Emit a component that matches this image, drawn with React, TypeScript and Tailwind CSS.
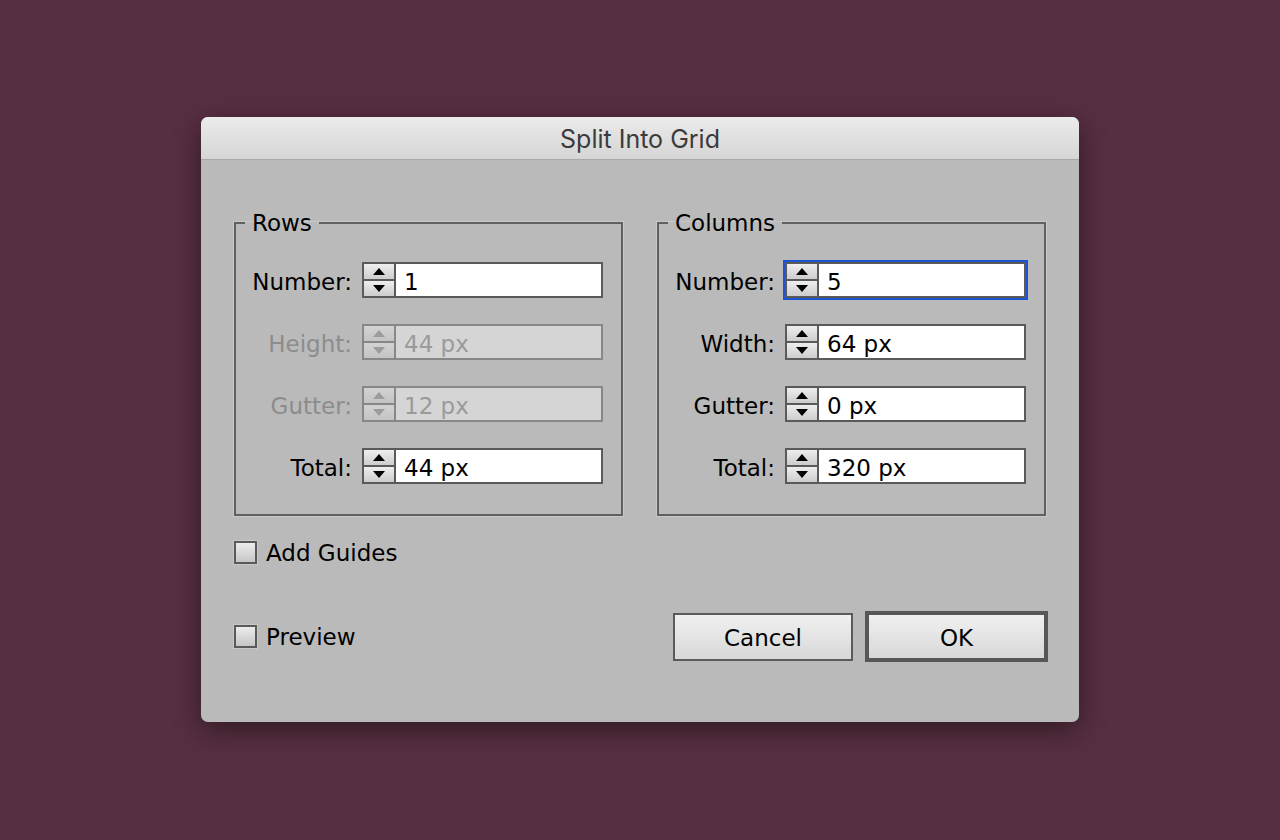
import clsx from 'clsx';

type Field = {
  label: string;
  value: string;
  disabled?: boolean;
  focused?: boolean;
};

const rows: Field[] = [
  { label: 'Number:', value: '1' },
  { label: 'Height:', value: '44 px', disabled: true },
  { label: 'Gutter:', value: '12 px', disabled: true },
  { label: 'Total:', value: '44 px' },
];

const columns: Field[] = [
  { label: 'Number:', value: '5', focused: true },
  { label: 'Width:', value: '64 px' },
  { label: 'Gutter:', value: '0 px' },
  { label: 'Total:', value: '320 px' },
];

function Arrow({ up, disabled }: { up?: boolean; disabled?: boolean }) {
  return (
    <svg width="12" height="7" viewBox="0 0 12 7" className={disabled ? 'fill-[#9c9c9c]' : 'fill-black'}>
      {up ? <polygon points="0,7 6,0 12,7" /> : <polygon points="0,0 12,0 6,7" />}
    </svg>
  );
}

function Stepper({ value, disabled, focused }: Omit<Field, 'label'>) {
  const half = clsx(
    'flex flex-1 items-center justify-center',
    disabled ? 'bg-gradient-to-b from-[#d2d2d2] to-[#c4c4c4]' : 'bg-gradient-to-b from-[#eeeeee] to-[#cdcdcd]'
  );
  return (
    <div
      className={clsx(
        'flex h-[36px] w-[241px] border-2',
        disabled ? 'border-[#878787]' : 'border-[#5a5a5a]',
        focused && 'shadow-[0_0_0_2px_#1d52d2]'
      )}
    >
      <div className={clsx('flex w-[32px] flex-col border-r-2', disabled ? 'border-[#878787]' : 'border-[#5a5a5a]')}>
        <div className={clsx(half, 'border-b-2', disabled ? 'border-[#878787]' : 'border-[#5a5a5a]')}>
          <Arrow up disabled={disabled} />
        </div>
        <div className={half}>
          <Arrow disabled={disabled} />
        </div>
      </div>
      <div
        className={clsx(
          'flex flex-1 items-center pt-[5px] pl-[8px] text-[23px] leading-none',
          disabled ? 'bg-[#d5d5d5] text-[#9a9a9a]' : 'bg-white text-black'
        )}
      >
        {value}
      </div>
    </div>
  );
}

function Group({ title, fields }: { title: string; fields: Field[] }) {
  return (
    <fieldset className="w-[389px] border-2 border-[#606060] shadow-[0_0_0_1px_#c8c8c8]">
      <legend className="ml-[9px] px-[7px] text-[23px] leading-[28px] text-black">{title}</legend>
      <div className="flex flex-col gap-[26px] pt-[25px] pb-[30px]">
        {fields.map((f) => (
          <div key={f.label} className="flex items-center">
            <span
              className={clsx(
                'w-[116px] pt-[5px] text-right text-[23px] leading-none',
                f.disabled ? 'text-[#8c8c8c]' : 'text-black'
              )}
            >
              {f.label}
            </span>
            <div className="ml-[10px]">
              <Stepper value={f.value} disabled={f.disabled} focused={f.focused} />
            </div>
          </div>
        ))}
      </div>
    </fieldset>
  );
}

function Checkbox({ label }: { label: string }) {
  return (
    <label className="flex items-center gap-[9px]">
      <span className="h-[23px] w-[23px] border-2 border-[#5a5a5a] bg-gradient-to-b from-[#ececec] to-[#c6c6c6] shadow-[0_0_0_1px_#c8c8c8]" />
      <span className="pt-[2px] text-[23px] leading-none text-black">{label}</span>
    </label>
  );
}

export default function App() {
  return (
    <div className="flex h-[840px] w-full justify-center bg-[#572f42] pt-[117px] font-['DejaVu_Sans',sans-serif]">
      <div className="flex h-[605px] w-[878px] flex-col overflow-hidden rounded-[7px] bg-[#bababa] shadow-[0_8px_28px_rgba(0,0,0,0.45)]">
        <div className="flex h-[43px] items-center justify-center border-b border-[#a9a9a9] bg-gradient-to-b from-[#ebebeb] to-[#d5d5d5]">
          <span className="pt-[3px] font-['Inter',sans-serif] text-[25px] leading-none text-[#3b3b3b]">Split Into Grid</span>
        </div>

        <div className="flex flex-col px-[33px] pt-[49px]">
          <div className="flex justify-between">
            <Group title="Rows" fields={rows} />
            <Group title="Columns" fields={columns} />
          </div>

          <div className="mt-[24px]">
            <Checkbox label="Add Guides" />
          </div>

          <div className="mt-[46px] flex items-center justify-between">
            <Checkbox label="Preview" />
            <div className="-mr-[2px] flex items-center gap-[12px]">
              <button className="h-[48px] w-[180px] border-2 border-[#5a5a5a] bg-gradient-to-b from-[#f0f0f0] to-[#d8d8d8] pt-[4px] text-[23px] leading-none text-black">
                Cancel
              </button>
              <button className="h-[51px] w-[183px] border-4 border-[#575757] bg-gradient-to-b from-[#f0f0f0] to-[#d8d8d8] pt-[4px] text-[23px] leading-none text-black">
                OK
              </button>
            </div>
          </div>
        </div>
      </div>
    </div>
  );
}
